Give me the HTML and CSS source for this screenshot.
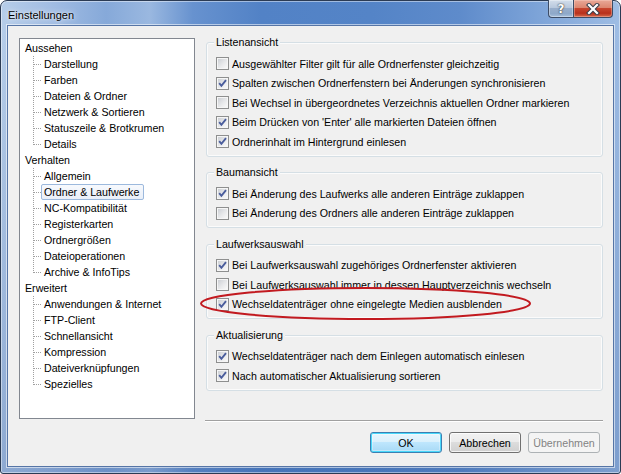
FILE: index.html
```html
<!DOCTYPE html>
<html lang="de">
<head>
<meta charset="utf-8">
<title>Einstellungen</title>
<link rel="stylesheet" href="styles.css">
</head>
<body>
<div class="window">
  <div class="titlebar">
    <span class="title">Einstellungen</span>
    <div class="caption-buttons">
      <span class="cap-btn help">?</span>
      <span class="cap-btn close">
        <svg width="14" height="12" viewBox="0 0 14 12">
          <path d="M3 2 L11 10 M11 2 L3 10" stroke="#3a3f4a" stroke-width="4.2" stroke-linecap="square" fill="none"/>
          <path d="M3 2 L11 10 M11 2 L3 10" stroke="#ffffff" stroke-width="2.2" stroke-linecap="square" fill="none"/>
        </svg>
      </span>
    </div>
  </div>
  <div class="client">
    <div class="main">
      <div class="tree">
        <ul class="tree-root">
          <li><span class="label">Aussehen</span>
            <ul class="children">
              <li><span class="label">Darstellung</span></li>
              <li><span class="label">Farben</span></li>
              <li><span class="label">Dateien &amp; Ordner</span></li>
              <li><span class="label">Netzwerk &amp; Sortieren</span></li>
              <li><span class="label">Statuszeile &amp; Brotkrumen</span></li>
              <li><span class="label">Details</span></li>
            </ul>
          </li>
          <li><span class="label">Verhalten</span>
            <ul class="children">
              <li><span class="label">Allgemein</span></li>
              <li><span class="label selected">Ordner &amp; Laufwerke</span></li>
              <li><span class="label">NC-Kompatibilität</span></li>
              <li><span class="label">Registerkarten</span></li>
              <li><span class="label">Ordnergrößen</span></li>
              <li><span class="label">Dateioperationen</span></li>
              <li><span class="label">Archive &amp; InfoTips</span></li>
            </ul>
          </li>
          <li><span class="label">Erweitert</span>
            <ul class="children">
              <li><span class="label">Anwendungen &amp; Internet</span></li>
              <li><span class="label">FTP-Client</span></li>
              <li><span class="label">Schnellansicht</span></li>
              <li><span class="label">Kompression</span></li>
              <li><span class="label">Dateiverknüpfungen</span></li>
              <li><span class="label">Spezielles</span></li>
            </ul>
          </li>
        </ul>
      </div>
      <div class="pages">
        <div class="group">
          <div class="group-title">Listenansicht</div>
          <ul class="options">
            <li><span class="cb"></span>Ausgewählter Filter gilt für alle Ordnerfenster gleichzeitig</li>
            <li><span class="cb"><svg width="9" height="9" viewBox="0 0 9 9"><path d="M1.2 4.2 L3.4 6.8 L8 1.2" stroke="#4a5d9c" stroke-width="1.9" fill="none"/></svg></span>Spalten zwischen Ordnerfenstern bei Änderungen synchronisieren</li>
            <li><span class="cb"></span>Bei Wechsel in übergeordnetes Verzeichnis aktuellen Ordner markieren</li>
            <li><span class="cb"><svg width="9" height="9" viewBox="0 0 9 9"><path d="M1.2 4.2 L3.4 6.8 L8 1.2" stroke="#4a5d9c" stroke-width="1.9" fill="none"/></svg></span>Beim Drücken von 'Enter' alle markierten Dateien öffnen</li>
            <li><span class="cb"><svg width="9" height="9" viewBox="0 0 9 9"><path d="M1.2 4.2 L3.4 6.8 L8 1.2" stroke="#4a5d9c" stroke-width="1.9" fill="none"/></svg></span>Ordnerinhalt im Hintergrund einlesen</li>
          </ul>
        </div>
        <div class="group">
          <div class="group-title">Baumansicht</div>
          <ul class="options">
            <li><span class="cb"><svg width="9" height="9" viewBox="0 0 9 9"><path d="M1.2 4.2 L3.4 6.8 L8 1.2" stroke="#4a5d9c" stroke-width="1.9" fill="none"/></svg></span>Bei Änderung des Laufwerks alle anderen Einträge zuklappen</li>
            <li><span class="cb"></span>Bei Änderung des Ordners alle anderen Einträge zuklappen</li>
          </ul>
        </div>
        <div class="group">
          <div class="group-title">Laufwerksauswahl</div>
          <ul class="options">
            <li><span class="cb"><svg width="9" height="9" viewBox="0 0 9 9"><path d="M1.2 4.2 L3.4 6.8 L8 1.2" stroke="#4a5d9c" stroke-width="1.9" fill="none"/></svg></span>Bei Laufwerksauswahl zugehöriges Ordnerfenster aktivieren</li>
            <li><span class="cb"></span>Bei Laufwerksauswahl immer in dessen Hauptverzeichnis wechseln</li>
            <li><span class="cb"><svg width="9" height="9" viewBox="0 0 9 9"><path d="M1.2 4.2 L3.4 6.8 L8 1.2" stroke="#4a5d9c" stroke-width="1.9" fill="none"/></svg></span>Wechseldatenträger ohne eingelegte Medien ausblenden</li>
          </ul>
        </div>
        <div class="group">
          <div class="group-title">Aktualisierung</div>
          <ul class="options">
            <li><span class="cb"><svg width="9" height="9" viewBox="0 0 9 9"><path d="M1.2 4.2 L3.4 6.8 L8 1.2" stroke="#4a5d9c" stroke-width="1.9" fill="none"/></svg></span>Wechseldatenträger nach dem Einlegen automatisch einlesen</li>
            <li><span class="cb"><svg width="9" height="9" viewBox="0 0 9 9"><path d="M1.2 4.2 L3.4 6.8 L8 1.2" stroke="#4a5d9c" stroke-width="1.9" fill="none"/></svg></span>Nach automatischer Aktualisierung sortieren</li>
          </ul>
        </div>
      </div>
    </div>
    <div class="footer">
      <span class="btn default">OK</span>
      <span class="btn">Abbrechen</span>
      <span class="btn disabled">Übernehmen</span>
    </div>
  </div>
  <svg class="highlight" width="332" height="36" viewBox="0 0 332 36">
    <ellipse cx="165.5" cy="17.5" rx="164.5" ry="15.5" fill="none" stroke="#c21a20" stroke-width="2"/>
  </svg>
</div>
</body>
</html>
```
FILE: styles.css
```css
* { box-sizing: border-box; }
html, body { margin: 0; padding: 0; }
body {
  width: 621px;
  height: 474px;
  overflow: hidden;
  font-family: "Liberation Sans", Arial, sans-serif;
  font-size: 8pt;
  color: #000;
}
ul { list-style: none; margin: 0; padding: 0; }

.window {
  position: relative;
  width: 621px;
  height: 474px;
  border: 1px solid #2b3b54;
  border-radius: 7px 7px 3px 3px;
  display: flex;
  flex-direction: column;
  background:
    linear-gradient(180deg, rgba(255,255,255,0) 0, rgba(255,255,255,0) 30px, rgba(40,80,150,0.28) 100%),
    linear-gradient(90deg, #b6cde9 0%, #a2bde3 8%, #86a9d9 17%, #9ab8e0 24%, #6792cf 31%, #5282c6 42%, #5484c7 60%, #5e8bcb 74%, #7ba2d7 86%, #9fbde4 100%);
  box-shadow: inset 0 0 0 1px rgba(255,255,255,0.45);
}

.titlebar {
  height: 24px;
  display: flex;
  justify-content: space-between;
  align-items: flex-start;
  padding-left: 7px;
}
.title {
  padding-top: 7px;
  font-size: 11px;
  line-height: 14px;
  color: #000;
  text-shadow: 0 0 6px rgba(255,255,255,0.9), 0 0 2px rgba(255,255,255,0.8);
}
.caption-buttons {
  display: flex;
  margin-right: 7px;
  margin-top: -1px;
}
.cap-btn {
  height: 18px;
  display: flex;
  align-items: center;
  justify-content: center;
  border: 1px solid #3d4c66;
  border-top: none;
}
.help {
  width: 25px;
  border-right: none;
  border-radius: 0 0 0 4px;
  background: linear-gradient(180deg, #d3deeb 0%, #b8c8dd 45%, #98aecb 50%, #8ea8c9 80%, #a7c0dd 100%);
  color: #fff;
  font-weight: bold;
  font-size: 12px;
  font-family: "DejaVu Sans", sans-serif;
  text-shadow: 0 0 1px #333, 0 0 2px #444;
  box-shadow: inset 0 0 0 1px rgba(255,255,255,0.35);
}
.close {
  width: 40px;
  border-radius: 0 0 4px 0;
  background: linear-gradient(180deg, #e9a998 0%, #dc8670 45%, #c7452e 50%, #b8301c 78%, #d56a4c 100%);
  box-shadow: inset 0 0 0 1px rgba(255,220,210,0.35);
}

.client {
  flex: 1;
  margin: 0 6px 6px 6px;
  border: 1px solid #5675a6;
  box-shadow: 0 0 0 1px rgba(255,255,255,0.55);
  background: #f0f0f0;
  padding: 12px 10px 13px 11px;
  display: flex;
  flex-direction: column;
}

.main {
  display: flex;
  gap: 11px;
  height: 381px;
}

.tree {
  width: 176px;
  height: 381px;
  flex: none;
  border: 1px solid #828790;
  background: #fff;
  padding: 1px 0 0 2px;
}
.tree li { line-height: 16px; }
.label {
  display: inline-block;
  height: 16px;
  line-height: 14px;
  padding: 0 4px 0 2px;
  border: 1px solid transparent;
  white-space: nowrap;
}
.label.selected {
  border-color: #9cb9dd;
  border-radius: 2px;
  background: linear-gradient(180deg, #f7f9fd 0%, #e9eff8 100%);
}
.children li {
  padding-left: 19px;
  background:
    repeating-linear-gradient(90deg, #a0a0a0 0 1px, transparent 1px 2px) 12px 8px / 7px 1px no-repeat,
    repeating-linear-gradient(180deg, #a0a0a0 0 1px, transparent 1px 2px) 11px 0 / 1px 100% no-repeat;
}
.children li:last-child {
  background:
    repeating-linear-gradient(90deg, #a0a0a0 0 1px, transparent 1px 2px) 12px 8px / 7px 1px no-repeat,
    repeating-linear-gradient(180deg, #a0a0a0 0 1px, transparent 1px 2px) 11px 0 / 1px 9px no-repeat;
}

.pages {
  flex: 1;
  padding-top: 4px;
  display: flex;
  flex-direction: column;
  gap: 15.5px;
}
.group {
  border: 1px solid #d5dfe5;
  border-radius: 3px;
  box-shadow: inset 0 0 0 1px rgba(255,255,255,0.7);
  padding: 0 0 4px 9px;
}
.group-title {
  width: fit-content;
  margin: -7px 0 0 -2px;
  padding: 0 2px;
  line-height: 13px;
  background: #f0f0f0;
}
.options { padding-top: 5px; }
.options li {
  height: 19.5px;
  display: flex;
  align-items: center;
  gap: 3px;
  white-space: nowrap;
}
.cb {
  width: 13px;
  height: 13px;
  flex: none;
  border: 1px solid #8e8f8f;
  padding: 1px;
  background: linear-gradient(135deg, #cdd0d5 0%, #e8e9eb 55%, #f9f9f9 100%) content-box, #f6f6f6;
  display: flex;
}
.cb svg { display: block; }

.footer {
  margin: 1px 0 0 186px;
  border-top: 1px solid #a0a0a0;
  box-shadow: inset 0 1px 0 #ffffff;
  padding: 11px 3px 0 0;
  display: flex;
  justify-content: flex-end;
  gap: 7px;
}
.btn {
  width: 72px;
  height: 21px;
  display: flex;
  align-items: center;
  justify-content: center;
  border: 1px solid #707070;
  border-radius: 3px;
  background: linear-gradient(180deg, #f2f2f2 0%, #ebebeb 49%, #dddddd 50%, #cfcfcf 100%);
  box-shadow: inset 0 0 0 1px rgba(255,255,255,0.75);
}
.btn.default {
  border-color: #3c7fb1;
  box-shadow: inset 0 0 0 1px #48d8fb, inset 0 0 0 2px rgba(255,255,255,0.3);
  background: linear-gradient(180deg, #eaf6fd 0%, #d9f0fc 49%, #bee6fd 50%, #a7d9f5 100%);
}
.btn.disabled {
  border-color: #adb2b5;
  background: #f4f4f4;
  color: #838383;
  box-shadow: none;
}

.highlight {
  position: absolute;
  left: 199px;
  top: 285px;
}
```
